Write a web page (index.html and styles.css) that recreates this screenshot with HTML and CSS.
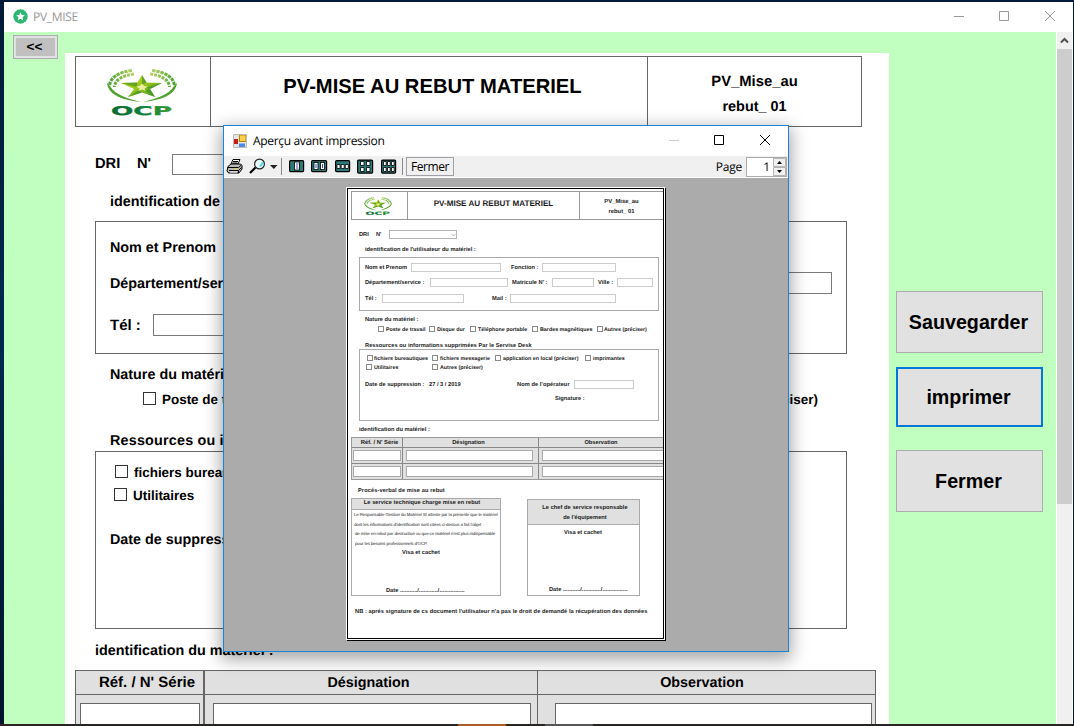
FILE: index.html
```html
<!DOCTYPE html>
<html lang="fr">
<head>
<meta charset="utf-8">
<title>PV_MISE</title>
<link rel="stylesheet" href="styles.css">
</head>
<body>
<svg width="0" height="0" class="defs">
  <defs>
    <linearGradient id="gold" x1="0" x2="1" y1="0" y2="1"><stop offset="0" stop-color="#cbd61c"/><stop offset=".5" stop-color="#9cc41c"/><stop offset="1" stop-color="#2f8f2c"/></linearGradient>
    <linearGradient id="leaf" x1="0" x2="70" y1="0" y2="0" gradientUnits="userSpaceOnUse"><stop offset="0" stop-color="#3f9a2c"/><stop offset=".4" stop-color="#c5d86a"/><stop offset=".6" stop-color="#c5d86a"/><stop offset="1" stop-color="#3f9a2c"/></linearGradient>
    <linearGradient id="ocp" x1="0" x2="1"><stop offset="0" stop-color="#0a6b35"/><stop offset=".6" stop-color="#12823a"/><stop offset="1" stop-color="#3b9c34"/></linearGradient>
    <symbol id="logo" viewBox="0 0 70 47">
      <g fill="none" stroke="url(#leaf)">
        <path d="M25 1.500C11 3 3 9 2.500 17" stroke-width="3" stroke-dasharray="3.400 .8"/>
        <path d="M45 1.500c14 1.500 22 7.500 22.500 15.500" stroke-width="3" stroke-dasharray="3.400 .8"/>
        <path d="M27 5C15 6.500 8 11 7.500 18" stroke-width="3" stroke-dasharray="3 1"/>
        <path d="M43 5c12 1.500 19 6 19.500 13" stroke-width="3" stroke-dasharray="3 1"/>
      </g>
      <path d="M0 14c1 10 12 17 34 19-12-3-26-7-31-16zM70 14c-1 10-12 17-34 19 12-3 26-7 31-16z" fill="#4fa22c"/>
      <path d="M35 6l4.500 7.500 15.500.5-12 6 5 8-13-4.500L21 28l6-8-13-6 16.500-.5z" fill="url(#gold)"/>
      <path d="M35 6v10l4.500-2.500zM55 14L39 18.500l4 1.500zM21 28l11-7 3 2.500zM14 14l16 4 .5-4.500zM48 28L38 21l5-1z" fill="#3a9128" opacity=".65"/>
      <path d="M35 14.500l2.200 2.600 3.800.3-3.500 2 1.200 2.600-3.700-1.600-3.700 1.600 1.200-2.600-3.500-2 3.800-.3z" fill="#e9efa0"/>
      <text x="4" y="45.500" font-family="DejaVu Sans" font-weight="bold" font-size="12" textLength="61" lengthAdjust="spacingAndGlyphs" fill="url(#ocp)" stroke="url(#ocp)" stroke-width=".3">OCP</text>
    </symbol>
  </defs>
</svg>

<div class="window">
  <div class="titlebar">
    <svg class="app-icon" viewBox="0 0 15 15"><circle cx="7.500" cy="7.500" r="7.200" fill="#2bb673"/><path d="M7.500 3l1.300 2.900 3.100.3-2.300 2.100.7 3.100-2.800-1.600-2.800 1.600.7-3.100-2.300-2.100 3.100-.3z" fill="#fff"/></svg>
    <span class="app-title">PV_MISE</span>
    <svg class="win-btns" viewBox="0 0 102 12" fill="none" stroke="#999"><path d="M0 6.500h10M45.500 1.500h9v9h-9zM91 1l10 10M101 1L91 11"/></svg>
  </div>
  <div class="workspace">
    <div class="rail"><button class="back">&lt;&lt;</button></div>
    <main class="sheet">
      <header class="head">
        <div class="head-logo"><svg class="logo"><use href="#logo"/></svg></div>
        <div class="head-title">PV-MISE AU REBUT MATERIEL</div>
        <div class="head-ref"><span>PV_Mise_au</span><span>rebut_ 01</span></div>
      </header>
      <div class="line dri"><span>DRI</span><span>N'</span><i class="field"></i></div>
      <div class="line ident">identification de l'utilisateur du matériel :</div>
      <section class="box user">
        <div class="line nom">Nom et Prenom</div>
        <div class="line dept"><span>Département/service :</span><i class="field"></i></div>
        <div class="line tel"><span>Tél :</span><i class="field"></i></div>
      </section>
      <div class="line nature">Nature du matériel :</div>
      <div class="line checks kinds"><i class="check"></i><span>Poste de travail</span><span class="last">Autres (préciser)</span></div>
      <div class="line ress">Ressources ou informations</div>
      <section class="box res">
        <div class="line checks c1"><i class="check"></i><span>fichiers bureautiques</span></div>
        <div class="line checks c2"><i class="check"></i><span>Utilitaires</span></div>
        <div class="line date">Date de suppression :</div>
      </section>
      <div class="line mat">identification du matériel :</div>
      <div class="grid">
        <div class="gh g1">Réf. / N' Série</div><div class="gh g2">Désignation</div><div class="gh g3">Observation</div>
        <div class="gc a"><i class="field"></i></div><div class="gc b"><i class="field"></i></div><div class="gc c"><i class="field"></i></div>
      </div>
    </main>
    <aside class="actions">
      <button>Sauvegarder</button>
      <button class="focus">imprimer</button>
      <button class="close">Fermer</button>
    </aside>
    <div class="scroll">
      <svg viewBox="0 0 15 17"><path d="M4 10.500l3.500-3.500 3.500 3.500" fill="none" stroke="#505050" stroke-width="2"/></svg>
      <div class="thumb"></div>
    </div>
  </div>
</div>
<div class="taskbar"><i class="t1"></i><i class="t2"></i></div>

<div class="dialog">
  <div class="d-title">
    <svg class="form-icon" viewBox="0 0 14 14"><path d="M.5.500h13v13H.5z" fill="#e4e4e4" stroke="#bbb"/><rect x="1" y="5" width="4" height="5" fill="#c51c16"/><rect x="6" y="1" width="7" height="7" fill="#b98200"/><rect x="7" y="1.500" width="5.500" height="5.500" fill="#ffd14a"/><rect x="6" y="9.500" width="6" height="3.500" fill="#4a8ae8"/></svg>
    <span class="d-name">Aperçu avant impression</span>
    <svg class="d-btns" viewBox="0 0 102 12" fill="none" stroke="#000"><path d="M0 6.500h10" stroke="#ccc"/><path d="M45.500 1.500h9v9h-9zM91 1l10 10M101 1L91 11"/></svg>
  </div>
  <div class="toolbar">
    <svg class="tools" viewBox="0 0 182 21">
      <g stroke="#000" stroke-width="1"><path d="M7 8l2-4.500h7L14 8z" fill="#fff"/><path d="M4 10.500l3-2.500h9.500L18 9.500v3.500L15 17H4.500L3 15z" fill="#b8b8b8"/><path d="M3.500 11.500h11L17.500 9M5 14.500h9.500V17M14.500 14.500l3-3M9 5.500h5M8.500 7h5" fill="none"/></g>
      <rect x="10" y="12.500" width="3" height="1.200" fill="#e6dd20"/><path d="M6 16h7" stroke="#fff"/>
      <circle cx="35.500" cy="8" r="4.900" fill="#e6ffff" stroke="#222" stroke-width="1.200"/><path d="M36 10.500l3-4" stroke="#4bd5ea" stroke-width="2"/><path d="M31.500 11.500L26 17" stroke="#000" stroke-width="2.200"/>
      <path d="M46 9h7.500l-3.700 4z" fill="#222"/><path d="M57.500 2v17" stroke="#888"/>
      <g fill="#2c7a78" stroke="#000" stroke-width="1.200"><rect x="65.600" y="4.600" width="14" height="11" rx="1"/><rect x="87.600" y="4.600" width="15" height="11" rx="1"/><rect x="111.600" y="4.600" width="14" height="11" rx="1"/><rect x="133.600" y="4.100" width="15" height="13" rx="1"/><rect x="157.600" y="4.100" width="14" height="13" rx="1"/></g>
      <g fill="#fff" stroke="#000" stroke-width=".8"><rect x="70.500" y="6" width="5" height="8"/><rect x="90" y="6.500" width="4" height="7"/><rect x="96.500" y="6.500" width="4" height="7"/><path d="M113 8.500h3v4h-3zM117.200 8.500h3v4h-3zM121.300 8.500h3v4h-3zM136.500 5.500h3.500v4h-3.500zM142.500 5.500h3.500v4h-3.500zM136.500 11.500h3.500v4h-3.500zM142.500 11.500h3.500v4h-3.500zM159.500 5.500h2.700v4h-2.700zM163.500 5.500h2.700v4h-2.700zM167.500 5.500h2.700v4h-2.700zM159.500 11.500h2.700v4h-2.700zM163.500 11.500h2.700v4h-2.700zM167.500 11.500h2.700v4h-2.700z"/></g>
      <path d="M72 8h2.500M72 10h2M72 12h2.500M92 8v4M98.500 8v4" stroke="#44b"/>
      <path d="M178.500 2v17" stroke="#888"/>
    </svg>
    <button class="t-close">Fermer</button>
    <span class="t-page">Page</span>
    <div class="spin"><span>1</span><svg viewBox="0 0 13 18"><path d="M.5.500h12v8H.5zM.5 9.500h12v8H.5z" fill="#f0f0f0" stroke="#b4b4b4"/><path d="M4 6l2.500-3L9 6zM4 12l2.500 3L9 12z"/></svg></div>
  </div>
  <div class="canvas">
    <div class="paper">
      <div class="p-head">
        <div class="p-logo"><svg><use href="#logo"/></svg></div>
        <div class="p-title">PV-MISE AU REBUT MATERIEL</div>
        <div class="p-ref"><span>PV_Mise_au</span><span>rebut_ 01</span></div>
      </div>
      <div class="p p-dri"><span>DRI</span><span>N'</span><i><svg viewBox="0 0 5 4"><path d="M.5 1l2 2 2-2" fill="none" stroke="#999" stroke-width=".7"/></svg></i></div>
      <div class="p p-ident">identification de l'utilisateur du matériel :</div>
      <div class="p-box p-user">
        <div class="p p-nom"><span>Nom et Prenom</span><i></i><span>Fonction :</span><i></i></div>
        <div class="p p-dept"><span>Département/service :</span><i></i><span>Matricule N' :</span><i></i><span>Ville :</span><i></i></div>
        <div class="p p-tel"><span>Tél :</span><i></i><span>Mail :</span><i></i></div>
      </div>
      <div class="p p-nature">Nature du matériel :</div>
      <div class="p ck p-kinds"><b></b><span>Poste de travail</span><b></b><span>Disque dur</span><b></b><span>Téléphone portable</span><b></b><span>Bardes magnétiques</span><b></b><span>Autres (préciser)</span></div>
      <div class="p p-ress">Ressources ou informations supprimées Par le Servise Desk</div>
      <div class="p-box p-res">
        <div class="p ck p-c1"><b></b><span>fichiers bureautiques</span><b></b><span>fichiers messagerie</span><b></b><span>application en local (préciser)</span><b></b><span>imprimantes</span></div>
        <div class="p ck p-c2"><b></b><span>Utilitaires</span><b></b><span>Autres (préciser)</span></div>
        <div class="p p-date"><span>Date de suppression :</span><span>27 / 3 / 2019</span><span>Nom de l'opérateur</span><i></i></div>
        <div class="p p-sign">Signature :</div>
      </div>
      <div class="p p-mat">identification du matériel :</div>
      <div class="p-table">
        <div class="p th"><span>Réf. / N' Série</span><span>Désignation</span><span>Observation</span></div>
        <div class="tr"><div><i></i></div><div><i></i></div><div><i></i></div></div>
        <div class="tr r2"><div><i></i></div><div><i></i></div><div><i></i></div></div>
      </div>
      <div class="p p-pv">Procés-verbal de mise au rebut</div>
      <div class="p-cards">
        <div class="card left">
          <div class="p card-h">Le service technique charge mise en rebut</div>
          <div class="small"><span class="s1">Le Responsable Gestion du Matériel SI atteste par la présente que le matériel</span><span class="s2">dont les informations d'identification sont citées ci-dessus a fait l'objet</span><span class="s3">de mise en rebut par destruction vu que ce matériel n'est plus indispensable</span><span class="s4">pour les besoins professionnels d'OCP.</span></div>
          <div class="p visa">Visa et cachet</div>
          <div class="p sig">Date .........../............/................</div>
        </div>
        <div class="card right">
          <div class="p card-h"><span>Le chef de service responsable</span><span>de l'équipement</span></div>
          <div class="p visa">Visa et cachet</div>
          <div class="p sig">Date .........../............/................</div>
        </div>
      </div>
      <div class="p p-nb">NB : aprés signature de cs document l'utilisateur n'a pas le droit de demandé la récupération des données</div>
    </div>
  </div>
</div>
</body>
</html>
```

FILE: styles.css
```css
* { box-sizing: border-box; }
body { margin: 0; width: 1074px; height: 726px; overflow: hidden; position: relative; background: linear-gradient(#001a38, #00284f 45%, #00142c); font-family: "Liberation Sans", Arial, sans-serif; color: #000; text-rendering: geometricPrecision; display: flex; flex-direction: column; }
button { font: inherit; color: #000; border-radius: 0; padding: 0; }
.defs { position: absolute; }
.window { margin: 2px 1px 0 4px; height: 722px; background: #fff; overflow: hidden; flex: none; }
.titlebar { height: 30px; display: flex; align-items: center; padding: 0 17px 0 9px; }
.app-icon { width: 15px; height: 15px; margin-top: -2px; }
.app-title { font: 12px "Open Sans", sans-serif; letter-spacing: -.3px; color: #999; margin-left: 5px; margin-top: -1px; flex: 1; }
.win-btns { width: 102px; height: 12px; margin-top: -2px; }
.workspace { display: flex; height: 692px; background: #c0ffc0; }
.rail { width: 61px; padding: 3px 0 0 9px; }
.back { display: block; width: 45px; height: 24px; border: 1px solid #adadad; background: #c0c0c0; box-shadow: inset 0 0 0 2px #e1e1e1; font-size: 13.500px; font-weight: bold; line-height: 22px; padding-right: 2px; }
.sheet { width: 824px; margin-top: 21px; padding: 3px 10px 0; background: #fff; font-weight: bold; font-size: 14.350px; overflow: hidden; }
.head { display: grid; grid-template-columns: 134px 437px 1fr; width: 787px; height: 71px; border: 1px solid #666; }
.head > div + div { border-left: 1px solid #666; }
.head-logo { padding: 12px 0 0 31px; }
.logo { width: 70px; height: 47px; display: block; }
.head-title { font-size: 20.200px; text-align: center; padding-top: 19px; line-height: 22px; padding-left: 7px; white-space: nowrap; }
.head-ref { display: flex; flex-direction: column; align-items: center; padding-top: 13px; line-height: 25px; font-size: 14.800px; }
.head-ref span + span { font-size: 14.400px; }
.line { height: 20px; line-height: 22px; white-space: nowrap; overflow: hidden; }
.field { display: block; background: #fff; border: 1px solid #7a7a7a; height: 22px; }
.dri { display: grid; grid-template-columns: 42px 35px 170px; margin: 27px 0 0 20px; height: 21px; line-height: 20px; font-size: 14.700px; }
.dri .field { height: 21px; }
.ident { margin: 16px 0 0 35px; }
.box { width: 752px; margin-left: 20px; border: 1px solid #666; overflow: hidden; }
.box .line { padding-left: 14px; }
.user { margin-top: 10px; height: 133px; }
.nom { margin-top: 15px; }
.box .dept, .box .tel { height: 22px; line-height: 24px; display: grid; }
.dept { margin-top: 15px; grid-template-columns: 530px 192px; }
.tel { margin-top: 20px; grid-template-columns: 43px 200px; }
.tel span { font-size: 15px; }
.nature { margin: 10px 0 0 35px; }
.checks { display: flex; align-items: flex-start; font-size: 13.450px; }
.check { width: 13px; height: 13px; border: 1px solid #333; background: #fff; margin: 3px 6px 0 0; flex: none; }
.kinds { margin: 5px 0 0 68px; width: 676px; }
.kinds .last { margin-left: auto; padding-right: 1px; }
.ress { margin: 21px 0 0 35px; letter-spacing: .2px; }
.res { margin-top: 1px; height: 178px; }
.box .c1 { margin-top: 10px; padding-left: 19px; }
.box .c2 { margin-top: 3px; padding-left: 18px; }
.date { margin-top: 24px; }
.mat { margin: 11px 0 0 20px; }
.grid { display: grid; grid-template-columns: 127px 334px 338px; grid-template-rows: 24px 40px; width: 801px; margin-top: 10px; border: 1px solid #666; background: #e0e0e0; }
.gh { text-align: center; line-height: 24px; border-bottom: 1px solid #666; overflow: hidden; }
.g1 { padding-left: 15px; font-size: 15px; }
.g2 { padding-right: 5px; }
.g3 { padding-right: 9px; }
.g2, .gc.b { border-left: 2px solid #666; }
.g3, .gc.c { border-left: 1px solid #666; }
.gc { padding: 8px 0 0 4px; }
.gc .field { width: 120px; height: 32px; border-color: #666; }
.gc.b { padding-left: 8px; } .gc.b .field { width: 318px; }
.gc.c { padding-left: 17px; } .gc.c .field { width: 317px; }
.actions { width: 167px; padding: 259px 0 0 7px; display: flex; flex-direction: column; }
.actions button { width: 147px; height: 62px; border: 1px solid #adadad; background: #e1e1e1; font-size: 19.700px; font-weight: bold; margin-bottom: 14px; flex: none; padding-right: 2px; }
.actions .focus { height: 60px; border: 2px solid #0078d7; margin-bottom: 23px; }
.scroll { width: 17px; background: #f0f0f0; border-left: 1px solid #fff; border-right: 1px solid #fff; }
.scroll svg { width: 15px; height: 17px; display: block; }
.thumb { height: 455px; background: #cdcdcd; }
.taskbar { height: 2px; background: #282424; display: flex; padding-left: 458px; flex: none; }
.t1 { width: 48px; background: #ab5d28; margin-right: 39px; }
.t2 { width: 48px; background: #555; }

/* print preview window */
.dialog { position: absolute; left: 223px; top: 125px; width: 566px; height: 527px; border: 1px solid #1883d7; background: #fff; box-shadow: 0 5px 16px 2px rgba(0,0,0,.36); display: flex; flex-direction: column; }
.d-title { height: 30px; display: flex; align-items: center; padding: 0 17px 0 9px; }
.form-icon { width: 14px; height: 14px; margin-top: -1px; }
.d-name { font: 12px "Open Sans", sans-serif; letter-spacing: -.33px; margin-left: 6px; margin-top: -1px; flex: 1; }
.d-btns { width: 102px; height: 12px; margin-top: -2px; }
.toolbar { height: 22px; background: #f0f0f0; border-bottom: 1px solid #fff; display: flex; align-items: center; font: 12px "Open Sans", sans-serif; }
.tools { width: 182px; height: 21px; }
.t-close { width: 48px; height: 19px; border: 1px solid #a0a0a8; background: #f0f0f0; line-height: 16px; letter-spacing: -.4px; }
.t-page { margin-left: auto; margin-right: 4px; letter-spacing: -.2px; }
.spin { width: 41px; height: 20px; margin-right: 1px; background: #fff; border: 1px solid #ababab; display: flex; justify-content: flex-end; line-height: 17px; gap: 3px; }
.spin svg { width: 13px; height: 18px; }
.canvas { flex: 1; background: #ababab; padding: 10px 0 0 123px; }
.paper { width: 317px; height: 451px; border: 1px solid #000; background: #fff; overflow: hidden; box-shadow: 0 0 0 1px #fff, 1px 1px 0 1px #000; color: #1c1c1c; }
.p { font-size: 5.700px; font-weight: bold; line-height: 10px; height: 8px; white-space: nowrap; }
.p i, .p-table i { display: block; border: 1px solid #ccc; background: #fff; height: 9px; }
.p-head { display: grid; grid-template-columns: 55px 172px 1fr; margin: 2px 0 0 3px; height: 29px; border: 1px solid #999; border-right: 0; font-weight: bold; }
.p-head > div + div { border-left: 1px solid #999; }
.p-logo { padding: 5px 0 0 12px; }
.p-logo svg { width: 28px; height: 19px; display: block; }
.p-title { font-size: 8.100px; line-height: 23px; text-align: center; white-space: nowrap; }
.p-ref { font-size: 5.900px; display: flex; flex-direction: column; align-items: center; padding-top: 5px; line-height: 10px; }
.p-dri { display: grid; grid-template-columns: 17px 13px 68px; margin: 10px 0 0 11px; height: 9px; line-height: 10px; }
.p-dri i { display: flex; justify-content: flex-end; align-items: center; border-color: #b5b5b5; }
.p-dri svg { width: 5px; height: 4px; }
.p-ident { margin: 6px 0 0 17px; }
.p-box { margin-left: 11px; width: 300px; border: 1px solid #aaa; overflow: hidden; }
.p-user { margin-top: 4px; height: 54px; padding-left: 5px; }
.p-user .p { display: grid; height: 9px; line-height: 11px; }
.p-user .p-nom { margin-top: 5px; grid-template-columns: 46px 90px 10px 31px 74px; }
.p-nom span:nth-of-type(2) { grid-column: 4; }
.p-user .p-dept { margin-top: 6px; grid-template-columns: 65px 78px 4px 40px 42px 4px 19px 36px; }
.p-dept span:nth-of-type(2) { grid-column: 4; }
.p-dept span:nth-of-type(3) { grid-column: 7; }
.p-user .p-tel { margin-top: 7px; grid-template-columns: 17px 82px 28px 18px 106px; }
.p-tel span:nth-of-type(2) { grid-column: 4; }
.p-nature { margin: 4px 0 0 17px; }
.ck { display: grid; align-items: start; font-size: 5.350px; }
.ck b { width: 6px; height: 6px; margin-top: 1px; border: 1px solid #8a8a8a; background: #fff; }
.p-kinds { margin: 2px 0 0 30px; grid-template-columns: 8px 43px 8px 33px 8px 54px 8px 57px 7px 50px; }
.p-ress { margin: 8px 0 0 17px; letter-spacing: .04px; }
.p-res { margin-top: 0; height: 72px; padding-left: 5px; }
.p-c1 { margin: 4px 0 0 2px; grid-template-columns: 7px 58px 8px 55px 8px 82px 8px 40px; }
.p-c2 { margin: 1px 0 0 1px; grid-template-columns: 8px 58px 8px 60px; }
.p-date { margin-top: 9px; display: grid; grid-template-columns: 64px 88px 57px 60px; height: 9px; line-height: 11px; }
.p-date span:nth-child(3) { letter-spacing: .06px; }
.p-sign { margin: 5px 0 0 190px; }
.p-mat { margin: 4px 0 0 11px; }
.p-table { margin: 4px 0 0 3px; border: 1px solid #999; border-right: 0; background: #e0e0e0; height: 43px; }
.th { display: grid; grid-template-columns: 50px 136px 1fr; height: 9px; line-height: 10px; text-align: center; overflow: hidden; }
.th span + span, .tr > div + div { border-left: 1px solid #888; }
.th span:first-child { padding-left: 5px; font-size: 5.900px; }
.th span:nth-child(2) { padding-right: 4px; }
.tr { display: grid; grid-template-columns: 50px 136px 1fr; border-top: 1px solid #888; height: 16px; }
.tr > div { padding: 2px 0 0 1px; }
.tr div + div { padding-left: 3px; }
.tr i { width: 48px; height: 11px; border-color: #aaa; }
.tr div + div i { width: 127px; }
.p-pv { margin: 6px 0 0 10px; letter-spacing: .08px; }
.p-cards { display: flex; align-items: flex-start; margin: 4px 0 0 3px; height: 98px; }
.card { border: 1px solid #aaa; overflow: hidden; }
.left { width: 150px; height: 98px; margin-right: 26px; }
.right { width: 113px; height: 97px; margin-top: 1px; }
.card-h { height: 11px; line-height: 9px; background: #e0e0e0; border-bottom: 1px solid #aaa; text-align: center; padding-right: 8px; letter-spacing: .03px; }
.right .card-h { display: flex; flex-direction: column; align-items: center; height: 25px; line-height: 10px; padding: 3px 0 0 3px; }
.small { height: 38px; font-size: 4.400px; line-height: 9.500px; white-space: nowrap; display: flex; flex-direction: column; padding-left: 2px; letter-spacing: -.1px; }
.s3, .s4 { margin-left: 1px; }
.left .visa { margin: 0 0 0 50px; }
.left .sig { margin: 30px 0 0 34px; }
.right .visa { margin: 3px 0 0 36px; }
.right .sig { margin: 49px 0 0 21px; }
.p-nb { margin: 11px 0 0 7px; letter-spacing: .05px; }
```
